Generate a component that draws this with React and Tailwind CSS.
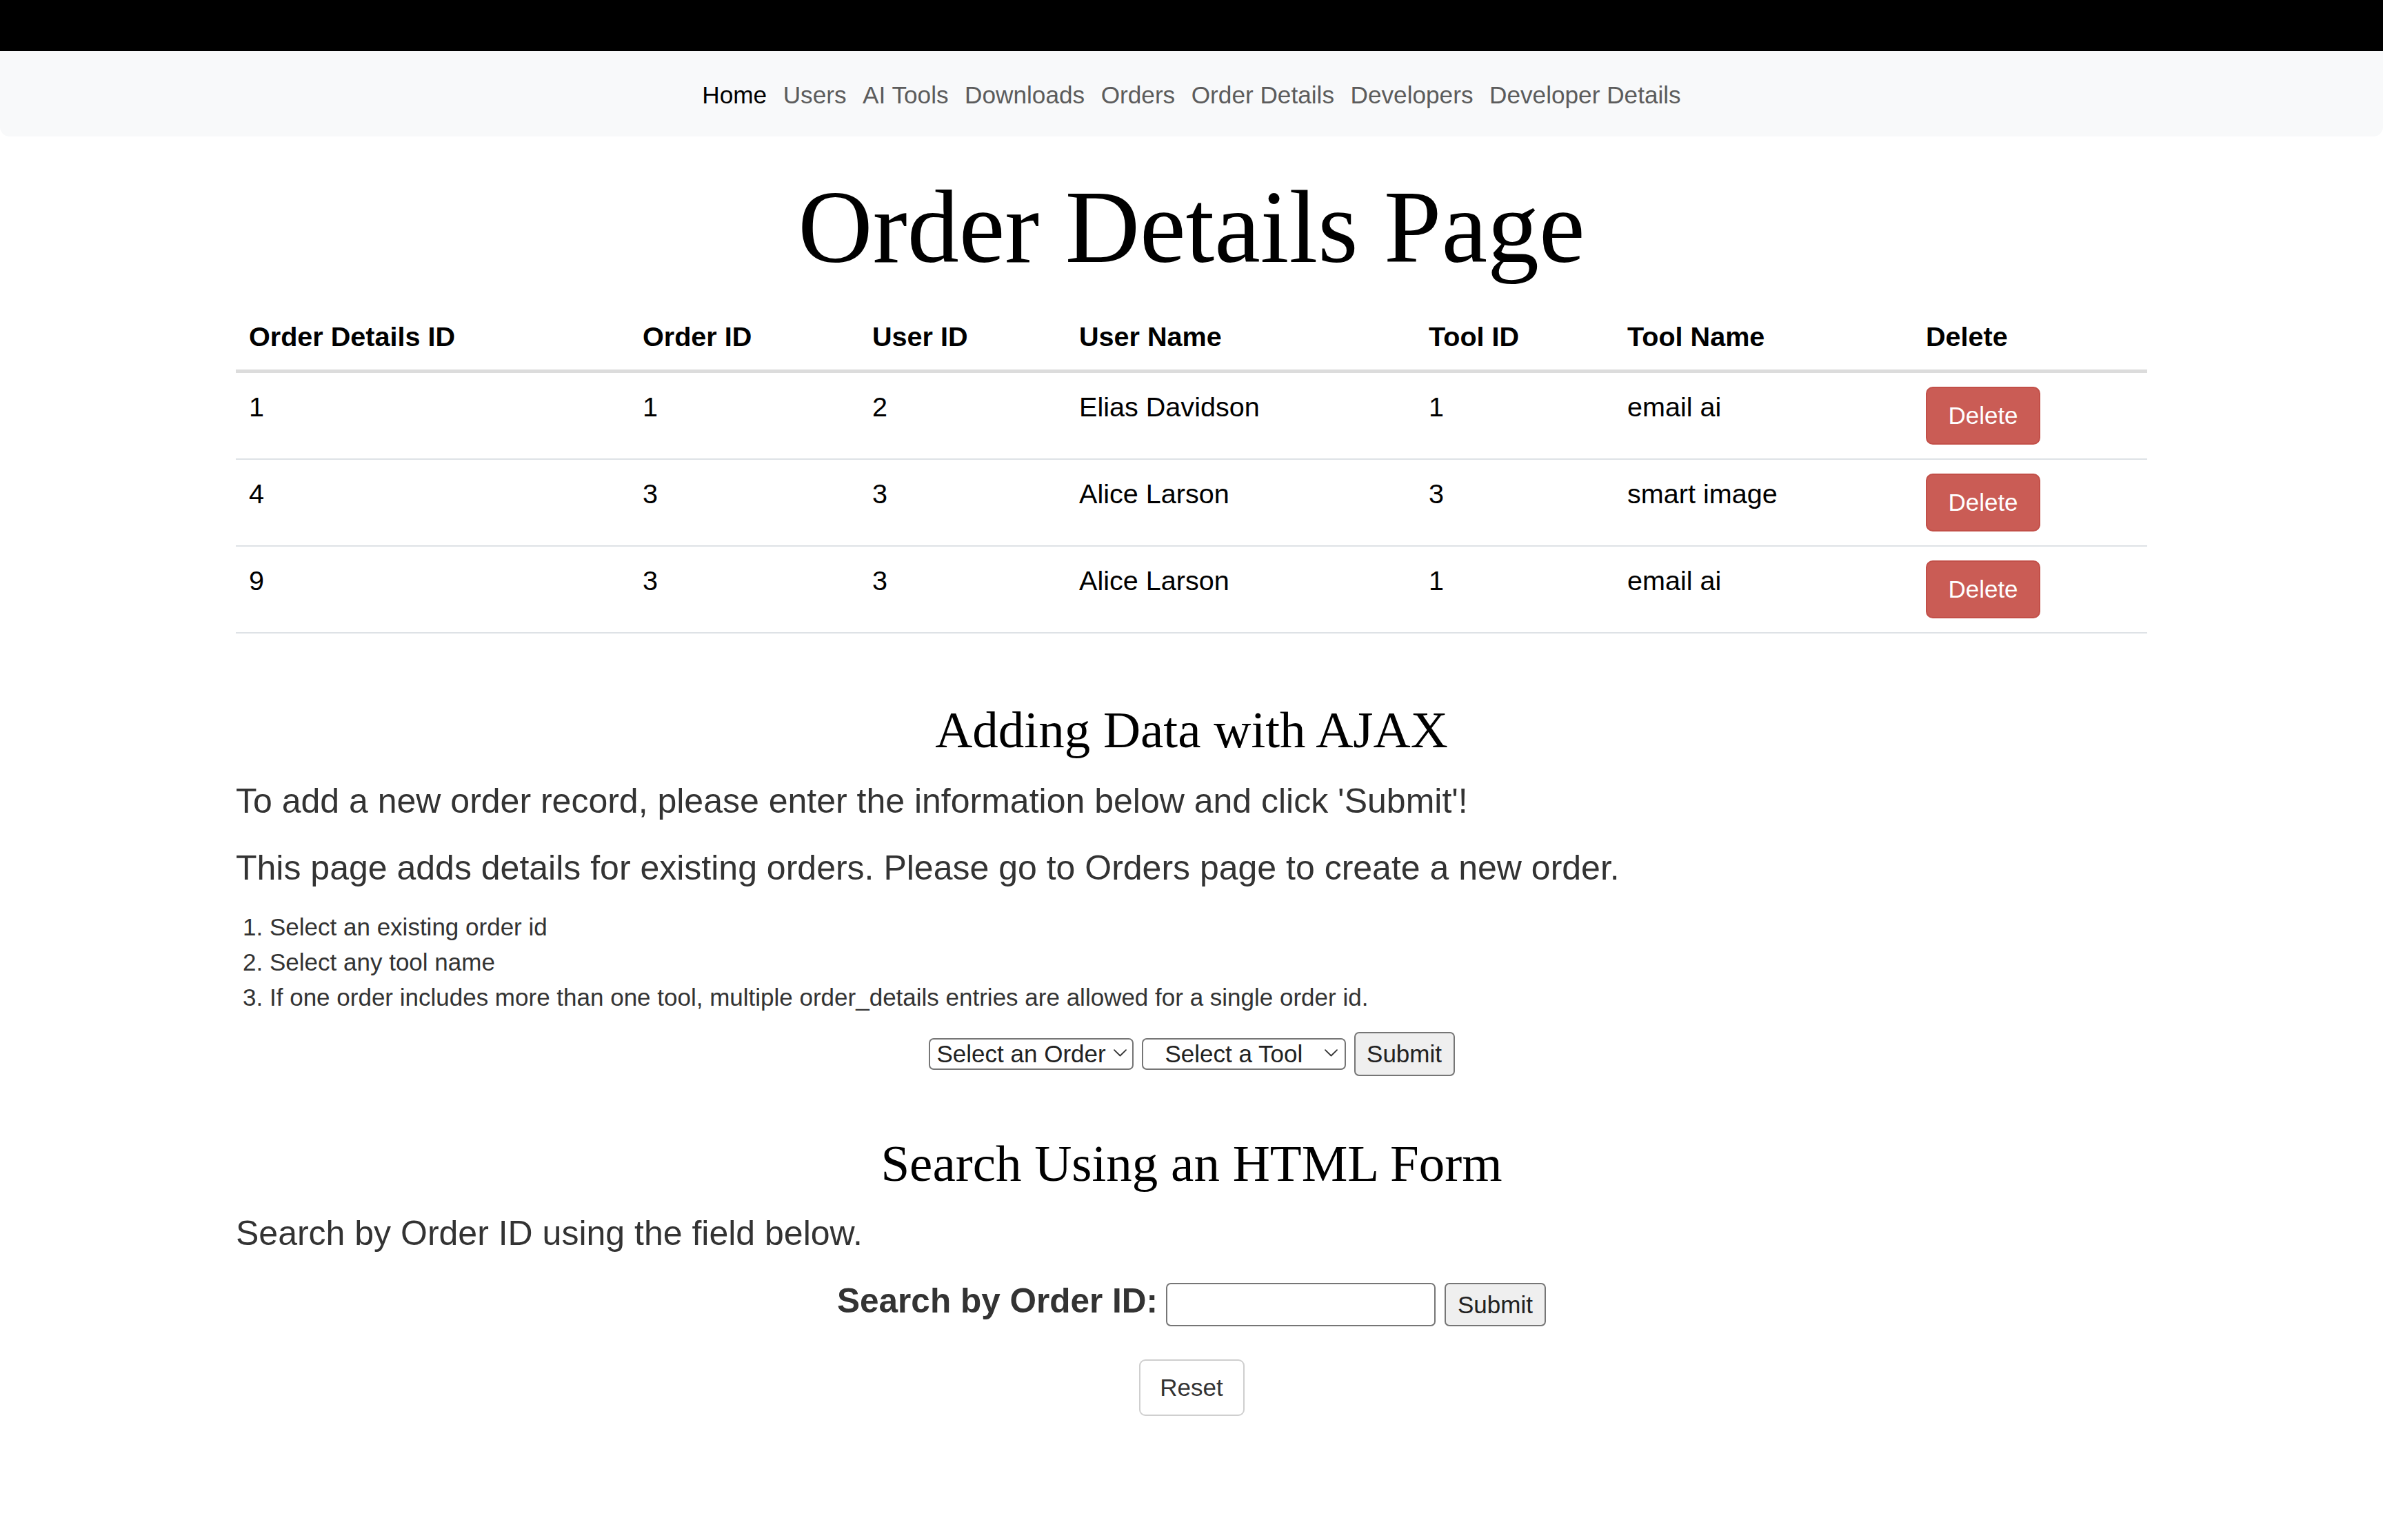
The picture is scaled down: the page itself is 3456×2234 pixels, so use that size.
import React from "react";

const rows = [
  { id: 1, order: 1, user: 2, name: "Elias Davidson", tool: 1, toolName: "email ai" },
  { id: 4, order: 3, user: 3, name: "Alice Larson", tool: 3, toolName: "smart image" },
  { id: 9, order: 3, user: 3, name: "Alice Larson", tool: 1, toolName: "email ai" },
];

const navLinks = ["Home", "Users", "AI Tools", "Downloads", "Orders", "Order Details", "Developers", "Developer Details"];

function Chevron() {
  return (
    <svg width="19" height="11" viewBox="0 0 19 11" fill="none" className="block">
      <path d="M1 1.2 L9.5 9.5 L18 1.2" stroke="#333" strokeWidth="1.8" strokeLinecap="round" strokeLinejoin="round" />
    </svg>
  );
}

function FakeSelect({ label, width, padLeft, chevronRight }) {
  return (
    <div className={`relative ${width} h-[46px]`}>
      <select
        className={`appearance-none w-full h-[46px] border-2 border-[#767676] rounded-[7px] bg-white text-[35px] text-[#222] leading-[40px] ${padLeft} outline-none font-['Liberation_Sans',Arial,sans-serif]`}
        defaultValue=""
      >
        <option value="">{label}</option>
      </select>
      <div className={`pointer-events-none absolute top-[16px] ${chevronRight}`}>
        <Chevron />
      </div>
    </div>
  );
}

export default function App() {
  return (
    <div className="min-h-[2234px] w-full bg-white font-['Liberation_Sans',Arial,sans-serif]">
      <div className="h-[74px] w-full bg-black" />
      <nav className="h-[124px] w-full bg-[#f8f9fa] rounded-b-[14px] flex items-center justify-center gap-[23.5px] pt-[3px] text-[35.2px] leading-[52px]">
        {navLinks.map((l, i) => (
          <a key={l} href="#" className={i === 0 ? "text-black" : "text-[#5c5c5c]"}>
            {l}
          </a>
        ))}
      </nav>

      <main className="w-[2772px] mx-auto">
        <h1 className="mt-[41px] text-center font-['Liberation_Serif','Times_New_Roman',serif] text-[150px] leading-[180px] text-black font-normal">
          Order Details Page
        </h1>

        <table className="mt-[22px] w-[2772px] table-fixed border-separate border-spacing-0 text-black">
          <thead>
            <tr>
              {[
                ["Order Details ID", "w-[571px]"],
                ["Order ID", "w-[333px]"],
                ["User ID", "w-[300px]"],
                ["User Name", "w-[507px]"],
                ["Tool ID", "w-[288px]"],
                ["Tool Name", "w-[433px]"],
                ["Delete", "w-[340px]"],
              ].map(([h, w]) => (
                <th
                  key={h}
                  className={`${w} text-left align-top font-bold text-[39.6px] leading-[59px] px-[19px] pt-[18px] pb-[18px] border-b-[5px] border-[#dcdcdc]`}
                >
                  {h}
                </th>
              ))}
            </tr>
          </thead>
          <tbody>
            {rows.map((r) => (
              <tr key={r.id}>
                {[r.id, r.order, r.user, r.name, r.tool, r.toolName].map((v, i) => (
                  <td
                    key={i}
                    className="align-top text-[39.6px] leading-[59px] px-[19px] pt-[20px] pb-[20px] border-b-2 border-[#dee2e6]"
                  >
                    {v}
                  </td>
                ))}
                <td className="align-top px-[19px] pt-[20px] pb-[20px] border-b-2 border-[#dee2e6]">
                  <button className="flex items-center justify-center w-[166px] h-[84px] rounded-[10px] bg-[#ca5c55] border-2 border-[#c24f48] text-white text-[35px] leading-[40px]">
                    Delete
                  </button>
                </td>
              </tr>
            ))}
          </tbody>
        </table>

        <h2 className="mt-[95px] text-center font-['Liberation_Serif','Times_New_Roman',serif] text-[75px] leading-[90px] text-black font-normal">
          Adding Data with AJAX
        </h2>
        <p className="mt-[21px] text-[50px] leading-[75px] text-[#333]">
          To add a new order record, please enter the information below and click 'Submit'!
        </p>
        <p className="mt-[22px] text-[50px] leading-[75px] text-[#333]">
          This page adds details for existing orders. Please go to Orders page to create a new order.
        </p>
        <ol className="mt-[22px] list-decimal list-outside pl-[49px] text-[35px] leading-[51px] text-[#333]">
          <li>Select an existing order id</li>
          <li>Select any tool name</li>
          <li>If one order includes more than one tool, multiple order_details entries are allowed for a single order id.</li>
        </ol>

        <div className="mt-[25px] h-[64px] flex items-center justify-center gap-[12px]">
          <FakeSelect label="Select an Order" width="w-[297px]" padLeft="pl-[10px]" chevronRight="right-[10px]" />
          <FakeSelect label="Select a Tool" width="w-[296px]" padLeft="pl-[32px]" chevronRight="right-[12px]" />
          <button className="w-[146px] h-[64px] bg-[#efefef] border-2 border-[#767676] rounded-[7px] text-[35px] leading-[40px] text-[#222]">
            Submit
          </button>
        </div>

        <h2 className="mt-[82px] text-center font-['Liberation_Serif','Times_New_Roman',serif] text-[75px] leading-[90px] text-black font-normal">
          Search Using an HTML Form
        </h2>
        <p className="mt-[19px] text-[50px] leading-[75px] text-[#333]">Search by Order ID using the field below.</p>

        <form className="mt-[28px] flex items-center justify-center" onSubmit={(e) => e.preventDefault()}>
          <label className="font-bold text-[49.5px] leading-[63px] pb-[12px] text-[#333]">Search by Order ID:</label>
          <input
            type="text"
            className="ml-[12px] w-[391px] h-[63px] border-2 border-[#767676] rounded-[7px] bg-white outline-none"
          />
          <button className="ml-[13px] w-[147px] h-[63px] bg-[#efefef] border-2 border-[#767676] rounded-[7px] text-[35px] leading-[40px] text-[#222]">
            Submit
          </button>
        </form>

        <div className="mt-[42px] flex justify-center">
          <button className="w-[153px] h-[82px] bg-white border-2 border-[#cfcfcf] rounded-[9px] text-[35px] leading-[40px] text-[#333]">
            Reset
          </button>
        </div>
      </main>
    </div>
  );
}
